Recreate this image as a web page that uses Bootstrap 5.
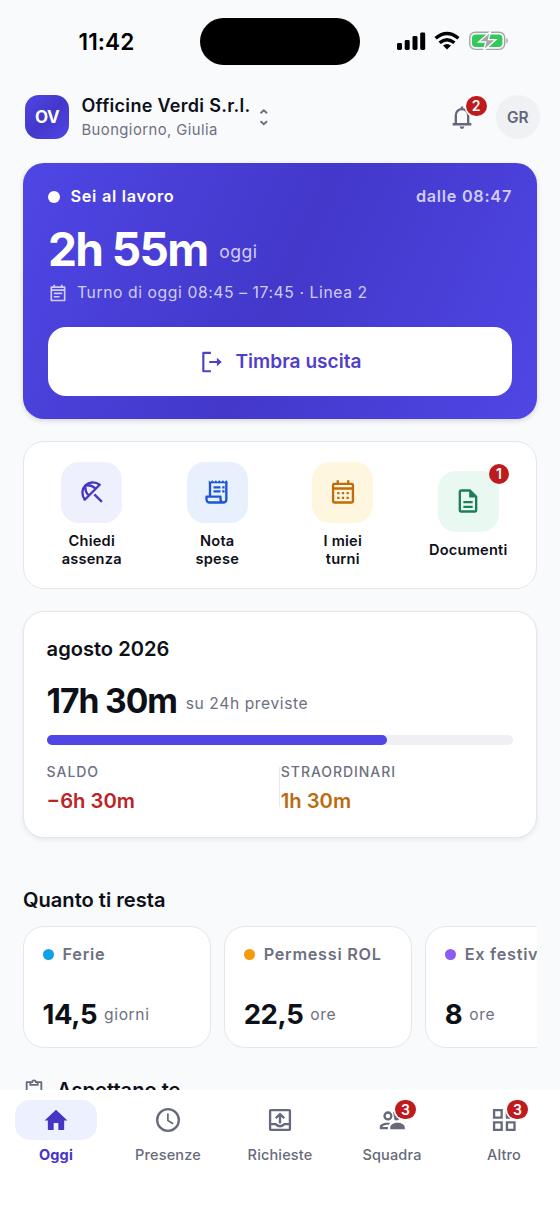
<!DOCTYPE html>
<html lang="it">
<head>
<meta charset="utf-8">
<meta name="viewport" content="width=device-width, initial-scale=1">
<title>Officine Verdi</title>
<link href="https://cdn.jsdelivr.net/npm/bootstrap@5.3.0/dist/css/bootstrap.min.css" rel="stylesheet">
<style>
body{font-family:Inter,"Liberation Sans",sans-serif;background:#f9fafc;color:#0e1018;width:560px;height:1217px;overflow:hidden;line-height:1.2}
svg{display:block;flex:none}
.ink{fill:none;stroke:currentColor;stroke-width:2;stroke-linejoin:round}
.screen{height:1217px}
.view{height:1090px;padding:0 23px}
.statusbar{height:83px;margin:0 -23px;color:#000}
.clock{width:200px;padding:0 0 0 78.5px;font-size:22.6px;font-weight:600;letter-spacing:.1px}
.island{width:160px;height:47px;border-radius:24px;background:#000}
.topbar{height:80px;padding:12.3px 0 0 2.3px}
.logo{width:43.5px;height:43.5px;border-radius:14px;background:linear-gradient(135deg,#4f46e5,#4338ca 50%,#4f46e5);font-size:17px;font-weight:700;letter-spacing:-.4px}
.who{margin-left:12.7px}
.company{font-size:18px;font-weight:600;letter-spacing:.3px;line-height:24px;margin-top:-1px}
.muted{color:#6d7080}
.hello{font-size:14.8px;letter-spacing:.45px;line-height:24px}
.avatar{width:43.5px;height:43.5px;background:#f0f1f4;font-size:15.4px;color:#62677a;margin-right:-2.5px;padding-top:2px}
.pin{position:absolute;height:19.5px;min-width:19.5px;border-radius:10px;background:#bd1c1e;color:#fff;font-size:14px;font-weight:600;line-height:19.5px;text-align:center}
.pin.wide{width:21px}
.ringed{box-shadow:0 0 0 1.5px #fbfcfe}
.hero{height:255.5px;border-radius:21px;padding:22px 25px;color:#fff;background:linear-gradient(115deg,#4f46e5,#4338ca 50%,#4f46e5);box-shadow:0 2px 5px rgba(30,30,80,.16)}
.dot{width:11px;height:11px;border-radius:50%;flex:none}
.state{font-size:16.3px;letter-spacing:.7px;height:23px;font-weight:600}
.name{margin-left:9px}
.big{font-size:46px;font-weight:700;letter-spacing:-1.6px;line-height:56px}
.total{font-size:33.6px;font-weight:700;letter-spacing:-1.1px;line-height:42px}
.amount{font-size:27.5px;font-weight:700;letter-spacing:-.4px;line-height:34px}
.unit{font-size:15.6px;letter-spacing:.6px}
.soft{color:#d0cdf6}
.cta{height:69px;border-radius:18px;background:#fff;color:#4f40cc;font-size:19.1px;font-weight:600;margin-top:22.5px}
.panel{background:#fff;border:1.4px solid #e5e6eb;border-radius:21px}
.actions{margin-top:22px;height:148.5px;padding:0 5px}
.tile{width:61px;height:61px;border-radius:18px}
.tag{font-size:14.6px;font-weight:600;line-height:18.2px;letter-spacing:.22px;margin-top:9px}
.month{margin-top:22px;height:227px;padding:0 22.6px;box-shadow:0 2px 4px rgba(20,20,50,.08)}
.heading{font-size:20.1px;font-weight:600;line-height:26px}
.track{height:10px;border-radius:5px;background:#f0f0f4}
.fill{height:10px;border-radius:5px;background:#4f46e5}
.cap{font-size:14px;font-weight:500;letter-spacing:.95px;line-height:18px}
.val{font-size:20.2px;font-weight:600;line-height:26px;margin-top:7px}
.split{position:relative;padding-left:.8px}
.split::before{content:"";position:absolute;left:-1px;top:4px;width:1.4px;height:40px;background:#e9e9ee}
.balances{gap:13.5px;margin-top:13.5px}
.balance{width:187.6px;height:122px;flex:none;padding:0 18.6px}
.balance .state{margin-top:16px}
.tabs{height:127px;background:#fff}
.tab{width:112px;font-size:14.5px;font-weight:500;letter-spacing:.15px;color:#666a7b;padding-top:10px}
.tab>span{margin-top:6px}
.pill{width:82px;height:40px;border-radius:15px}
.tab.on{color:#4635c6;font-weight:700}
.tab.on .pill{background:#edf0fe}
</style>
<script src="https://cdn.jsdelivr.net/npm/bootstrap@5.3.0/dist/js/bootstrap.bundle.min.js"></script>
</head>
<body>
<div class="screen d-flex flex-column">
<main class="view overflow-hidden">
  <div class="statusbar d-flex align-items-center">
    <div class="clock">11:42</div>
    <div class="island"></div>
    <div class="d-flex align-items-center ps-4 ms-2">
      <svg width="118" height="22" viewBox="0 0 118 22" style="margin:-1px 0 0 5px">
        <g fill="#000"><rect x="0" y="13" width="5" height="7" rx="1.4"/><rect x="7.7" y="10" width="5" height="10" rx="1.4"/><rect x="15.5" y="6" width="5" height="14" rx="1.4"/><rect x="23.2" y="2.4" width="5" height="17.6" rx="1.4"/></g>
        <g fill="none" stroke="#000" stroke-width="3.4"><path d="M38.6 8.3Q50 -1.4 61.4 8.3"/><path d="M42.6 12.8Q50 6.6 57.4 12.8"/></g><path d="M50 19.5l-4-4q4-3.2 8 0z"/>
        <rect x="72.7" y="2.2" width="35" height="17.2" rx="5.5" fill="none" stroke="#a6a6aa" stroke-width="1.4"/><rect x="75" y="4.5" width="30.4" height="12.6" rx="3.8" fill="#34c759"/><path d="M109.3 7.7q3 3 0 6z" fill="#a6a6aa"/>
        <path d="M93.6 1.4L81.5 12h7.3L86.7 20.6 99 9.6H91.5z" fill="#a6a6aa" stroke="#fff" stroke-width="1.3"/>
      </svg>
    </div>
  </div>

  <header class="topbar d-flex align-items-start">
    <div class="logo d-flex align-items-center justify-content-center text-white"><span>OV</span></div>
    <div class="who"><div class="company">Officine Verdi S.r.l.</div><div class="hello muted">Buongiorno, Giulia</div></div>
    <svg width="14" height="28" viewBox="0 0 14 28" style="margin:7.5px 0 0 6px"><path d="M3.500 10.200L6.800 7.200l3.300 3M3.500 18.200l3.300 3 3.300-3" fill="none" stroke="#6d7080" stroke-width="1.9"/></svg>
    <div class="ms-auto d-flex align-items-center">
      <div class="position-relative me-3 pe-1">
        <svg width="28" height="28" viewBox="0 0 24 24" color="#62677a"><path class="ink" d="M4 18.200h16M6.700 18v-7.500a5.300 5.300 0 0 1 10.600 0V18M12 5.200V3"/><path d="M10 20.200h4a2 2 0 0 1-4 0z" fill="currentColor"/></svg>
        <span class="pin wide ringed" style="left:17.5px;top:-7px">2</span>
      </div>
      <div class="avatar rounded-circle d-flex align-items-center justify-content-center fw-semibold"><span>GR</span></div>
    </div>
  </header>

  <section class="hero">
    <div class="state d-flex align-items-center"><span class="dot bg-white" style="width:12px;height:12px"></span><span style="margin-left:10.5px">Sei al lavoro</span><span class="ms-auto soft">dalle 08:47</span></div>
    <div class="d-flex align-items-center" style="margin-top:12.5px"><span class="big">2h 55m</span><span class="soft" style="font-size:17.6px;letter-spacing:.5px;margin:6px 0 0 11.5px">oggi</span></div>
    <div class="d-flex align-items-center soft" style="height:23px;margin-top:5px">
      <svg width="20" height="20" viewBox="0 0 24 24"><path class="ink" d="M4 5h16v16H4zM4 8.500h16M7 12.500h10M7 16.500h7M7.500 2v3M16.500 2v3"/></svg>
      <span style="font-size:15.7px;letter-spacing:.59px;margin-left:9px;padding-top:1px">Turno di oggi 08:45 – 17:45 · Linea 2</span>
    </div>
    <div class="cta d-flex align-items-center justify-content-center">
      <svg width="26" height="26" viewBox="0 0 24 24"><path class="ink" d="M11 3.500H4v17h7M9.500 12H18"/><path d="M16.500 8l4.500 4-4.500 4z" fill="currentColor"/></svg>
      <span style="margin-left:11px">Timbra uscita</span>
    </div>
  </section>

  <section class="panel actions d-flex align-items-center text-center">
    <div class="flex-fill w-25 d-flex flex-column align-items-center">
      <div class="tile d-flex align-items-center justify-content-center" style="background:#eef0fe;color:#4635c6"><svg width="28" height="28" viewBox="0 0 24 24"><path class="ink" d="M5.800 18.600C2.800 14.500 3.300 9.200 6.300 6.300s8.200-3.500 12.300-.5zM6.300 6.300C6 10 7.200 13.200 9.300 15M6.300 6.300C10 6 13.200 7.200 15 9.300M14 14l6.500 6.500"/></svg></div>
      <div class="tag">Chiedi<br>assenza</div>
    </div>
    <div class="flex-fill w-25 d-flex flex-column align-items-center">
      <div class="tile d-flex align-items-center justify-content-center" style="background:#e8f0fe;color:#1d56d0"><svg width="28" height="28" viewBox="0 0 24 24"><path class="ink" d="M6 15.500V4M20 4v14.500a2.500 2.500 0 0 1-2.500 2.500H5.500A2.500 2.500 0 0 1 3 18.500V16h12v2.500a2.500 2.500 0 0 0 5 0"/><path d="M5 4.500V2l1.500 1.500L8 2l1.500 1.500L11 2l1.500 1.500L14 2l1.500 1.500L17 2l1.500 1.500L20 2l1 1v1.500zM9 7h6v2H9zM9 10.500h6v2H9zM16.500 7h2v2h-2zM16.500 10.500h2v2h-2z" fill="currentColor"/></svg></div>
      <div class="tag">Nota<br>spese</div>
    </div>
    <div class="flex-fill w-25 d-flex flex-column align-items-center">
      <div class="tile d-flex align-items-center justify-content-center" style="background:#fff6e0;color:#c06c08"><svg width="28" height="28" viewBox="0 0 24 24"><path class="ink" d="M4.500 5h15a1 1 0 0 1 1 1v14a1 1 0 0 1-1 1h-15a1 1 0 0 1-1-1V6a1 1 0 0 1 1-1zM4 9h16M7.500 2v3M16.500 2v3"/><path d="M7 12h2v2H7zM11 12h2v2h-2zM15 12h2v2h-2zM7 16h2v2H7zM11 16h2v2h-2zM15 16h2v2h-2z" fill="currentColor"/></svg></div>
      <div class="tag">I miei<br>turni</div>
    </div>
    <div class="flex-fill w-25 d-flex flex-column align-items-center">
      <div class="tile position-relative d-flex align-items-center justify-content-center" style="background:#e9f9f1;color:#1a7f5a"><svg width="28" height="28" viewBox="0 0 24 24"><path d="M8 16h8v2H8zm0-4h8v2H8zm6-10H6c-1.100 0-2 .9-2 2v16c0 1.100.890 2 1.990 2H18c1.100 0 2-.9 2-2V8l-6-6zm4 18H6V4h7v5h5v11z" fill="currentColor"/></svg><span class="pin" style="right:-10px;top:-6.5px">1</span></div>
      <div class="tag">Documenti</div>
    </div>
  </section>

  <section class="panel month">
    <div class="heading" style="margin-top:24px">agosto 2026</div>
    <div class="d-flex align-items-center" style="margin-top:18px"><span class="total">17h 30m</span><span class="unit muted" style="margin:6px 0 0 9px">su 24h previste</span></div>
    <div class="track" style="margin-top:12.5px"><div class="fill" style="width:72.9%"></div></div>
    <div class="d-flex" style="margin-top:18px">
      <div class="w-50"><div class="cap muted">SALDO</div><div class="val" style="color:#bd2226">−6h 30m</div></div>
      <div class="w-50 split"><div class="cap muted">STRAORDINARI</div><div class="val" style="color:#b96c10">1h 30m</div></div>
    </div>
  </section>

  <h2 class="heading mb-0" style="margin-top:48.5px">Quanto ti resta</h2>
  <div class="balances d-flex overflow-hidden">
    <div class="panel balance"><div class="state d-flex align-items-center muted"><span class="dot" style="background:#13a0e6"></span><span class="name">Ferie</span></div>
      <div class="d-flex align-items-center" style="margin-top:31px"><span class="amount">14,5</span><span class="unit muted" style="margin:3px 0 0 7px">giorni</span></div></div>
    <div class="panel balance"><div class="state d-flex align-items-center muted"><span class="dot" style="background:#f59b0b"></span><span class="name">Permessi ROL</span></div>
      <div class="d-flex align-items-center" style="margin-top:31px"><span class="amount">22,5</span><span class="unit muted" style="margin:3px 0 0 7px">ore</span></div></div>
    <div class="panel balance"><div class="state d-flex align-items-center muted text-nowrap"><span class="dot" style="background:#8b5cf0"></span><span class="name">Ex festività</span></div>
      <div class="d-flex align-items-center" style="margin-top:31px"><span class="amount">8</span><span class="unit muted" style="margin:3px 0 0 7px">ore</span></div></div>
  </div>
  <div class="d-flex align-items-center" style="margin-top:29px;height:26px">
    <svg width="22" height="22" viewBox="0 0 24 24" color="#666a7b" style="margin-top:-2px"><path class="ink" d="M8 4.500H4V21h16V4.500h-4"/><path class="ink" d="M8 7.500v-3h2a2 2 0 0 1 4 0h2v3z"/></svg>
    <span class="heading" style="margin-left:12px">Aspettano te</span>
  </div>
</main>

<nav class="tabs d-flex text-center">
  <div class="tab on d-flex flex-column align-items-center"><div class="pill d-flex align-items-center justify-content-center"><svg width="28" height="28" viewBox="0 0 24 24"><path d="M10 20.500v-6h4v6h4.500q.5 0 .5-.5v-7.500h2.800L12 3.200 2.200 12.500H5V20q0 .5.500.5z" fill="currentColor"/></svg></div><span>Oggi</span></div>
  <div class="tab d-flex flex-column align-items-center"><div class="pill d-flex align-items-center justify-content-center"><svg width="28" height="28" viewBox="0 0 24 24"><circle class="ink" cx="12" cy="12" r="9.300"/><path class="ink" style="stroke-width:1.5" d="M11.900 6.500v6l4.500 2.800"/></svg></div><span>Presenze</span></div>
  <div class="tab d-flex flex-column align-items-center"><div class="pill d-flex align-items-center justify-content-center"><svg width="28" height="28" viewBox="0 0 24 24"><path class="ink" d="M4 3.500h16q.5 0 .5.500v16q0 .5-.5.500H4q-.5 0-.5-.5V4q0-.5.500-.5zM3.500 15.500h4.800q3.700 3.700 7.400 0h4.800M12 15V7.500M8.300 10.500L12 6.900l3.700 3.600"/></svg></div><span>Richieste</span></div>
  <div class="tab d-flex flex-column align-items-center"><div class="pill position-relative d-flex align-items-center justify-content-center"><svg width="28" height="28" viewBox="0 0 24 24"><circle class="ink" cx="8.500" cy="8.500" r="2.900"/><path d="M13 5.300a4 4 0 1 1 1.200 6.700zM10.500 20v-1.500c0-5.500 12.500-5.500 12.500 0V20zM1.500 20v-1.800c0-3.300 4.500-4.500 9-3.700L9 16.200c-3-.2-5 .8-5.200 1.900H8.500V20z" fill="currentColor"/></svg><span class="pin wide ringed" style="left:44px;top:-.5px">3</span></div><span>Squadra</span></div>
  <div class="tab d-flex flex-column align-items-center"><div class="pill position-relative d-flex align-items-center justify-content-center"><svg width="28" height="28" viewBox="0 0 24 24"><path class="ink" style="stroke-linejoin:miter" d="M3.500 3.500H10V10H3.500zM14.500 3.500H21V10h-6.500zM3.500 14H10v6.500H3.500zM14.500 14H21v6.500h-6.500z"/></svg><span class="pin wide ringed" style="left:44px;top:-.5px">3</span></div><span>Altro</span></div>
</nav>
</div>
</body>
</html>
